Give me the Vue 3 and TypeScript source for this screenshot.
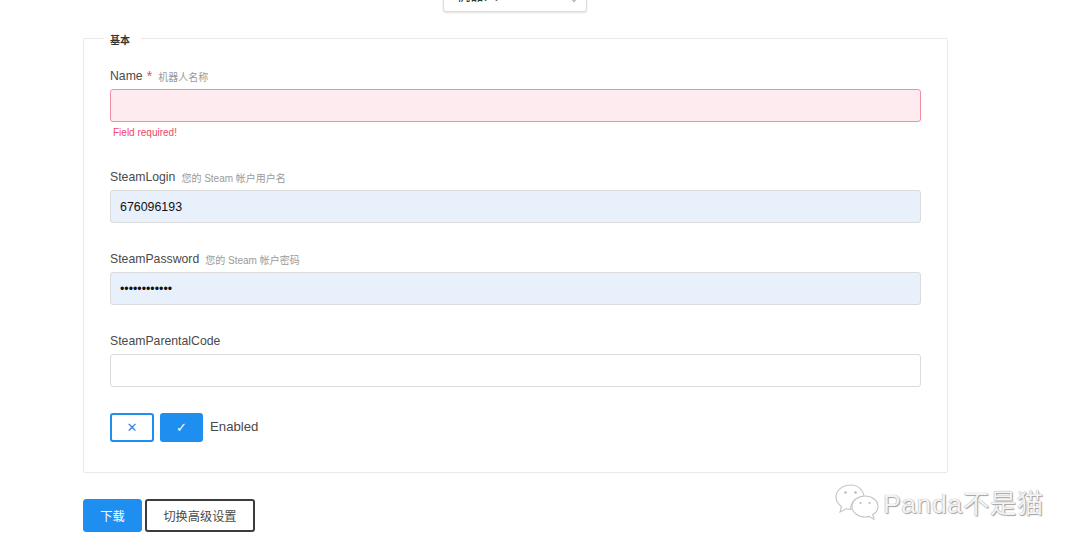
<script setup lang="ts">
interface Field { label: string; hint: string; value: string; type: string; state: string; required: boolean; error: string }
const fields: Field[] = [
  { label: 'Name', hint: '机器人名称', value: '', type: 'text', state: 'invalid', required: true, error: 'Field required!' },
  { label: 'SteamLogin', hint: '您的 Steam 帐户用户名', value: '676096193', type: 'text', state: 'filled', required: false, error: '' },
  { label: 'SteamPassword', hint: '您的 Steam 帐户密码', value: '............', type: 'password', state: 'filled', required: false, error: '' },
  { label: 'SteamParentalCode', hint: '', value: '', type: 'text', state: '', required: false, error: '' },
]
</script>

<template>
  <div class="page">
    <div class="top"><div class="select"><span class="select-text">机器人</span><span class="caret"></span></div></div>
    <fieldset class="box">
      <legend>基本</legend>
      <div v-for="f in fields" :key="f.label" class="field" :class="{ 'has-error': f.error }">
        <div class="label-row">
          <span class="label">{{ f.label }}</span>
          <span v-if="f.required" class="req">*</span>
          <span v-if="f.hint" class="hint">{{ f.hint }}</span>
        </div>
        <input class="input" :class="f.state" :type="f.type" :value="f.value" readonly />
        <div v-if="f.error" class="error">{{ f.error }}</div>
      </div>
      <div class="toggle-row">
        <button class="tbtn off">✕</button>
        <button class="tbtn on">✓</button>
        <span class="toggle-label">Enabled</span>
      </div>
    </fieldset>
    <div class="actions">
      <button class="btn primary">下载</button>
      <button class="btn outline">切换高级设置</button>
    </div>
    <div class="mark">
      <svg width="46" height="38" viewBox="0 0 46 38" fill="#fff" stroke="#c4c4c4" stroke-width="1.1">
        <path d="M17 2C8 2 2 7.500 2 14c0 4 2 7 5.500 9.500L6 29l6.500-3.200c1.500.4 3 .6 4.500.5-1-5 3-11 10-12.300h3C29.500 7 24 2 17 2z"/>
        <path d="M31 13c-7 0-13 4.500-13 10.500S24 34 31 34c1.500 0 2.500-.2 4-.6l5 3-1.300-4.800C42 29.800 44 27 44 23.500 44 17.500 38 13 31 13z"/>
        <circle cx="11.500" cy="9.500" r="1.300" fill="#bbb" stroke="none"/>
        <circle cx="21.500" cy="9.500" r="1.300" fill="#bbb" stroke="none"/>
        <circle cx="26.500" cy="20" r="1.100" fill="#bbb" stroke="none"/>
        <circle cx="35.500" cy="20" r="1.100" fill="#bbb" stroke="none"/>
      </svg>
      <span class="mark-text">Panda不是猫</span>
    </div>
  </div>
</template>

<style>
html, body { background: #fff; }
</style>

<style scoped>
.page {
  width: 1080px;
  height: 551px;
  overflow: hidden;
  position: relative;
  box-sizing: border-box;
  padding-left: 83px;
  font-family: "Liberation Sans", "Noto Sans CJK SC", sans-serif;
  color: #4a4a4a;
}
.top { height: 29px; position: relative; }
.select {
  position: absolute;
  left: 360px;
  top: -22px;
  width: 144px;
  height: 34px;
  box-sizing: border-box;
  border: 1px solid #dbdbdb;
  border-radius: 3px;
  box-shadow: 0 1px 2px rgba(0,0,0,.12);
  padding: 5px 12px;
  font-size: 14px;
  color: #363636;
  background: #fff;
}
.caret {
  position: absolute;
  right: 9px;
  top: 16px;
  width: 5px;
  height: 5px;
  border-right: 1px solid #aaa;
  border-bottom: 1px solid #aaa;
  transform: rotate(45deg);
}
.box {
  margin: 0;
  width: 865px;
  height: 444px;
  box-sizing: border-box;
  border: 1px solid #e9e9e9;
  border-radius: 2px;
  padding: 0 26px;
  min-width: 0;
}
legend {
  margin-left: -6px;
  padding: 6px 0 0;
  width: 37px;
  font-size: 10px;
  line-height: 12px;
  font-weight: 700;
  color: #363636;
  text-indent: 6px;
  white-space: nowrap;
}
.field { height: 82px; }
.field:first-of-type { margin-top: 19px; }
.field.has-error { height: 101px; }
.field:last-of-type .label-row { margin-bottom: 2px; }
.label-row {
  height: 20px;
  display: flex;
  align-items: center;
  margin-bottom: 3px;
}
.label { font-size: 12.25px; color: #4a4a4a; }
.req { color: #f14668; font-size: 14px; margin-left: 4px; }
.hint { font-size: 10px; color: #9a9a9a; margin-left: 6px; }
.input {
  display: block;
  width: 811px;
  height: 33px;
  box-sizing: border-box;
  border: 1px solid #dbdbdb;
  border-radius: 3px;
  padding: 1px 9px 0;
  font-family: "Liberation Sans", sans-serif;
  font-size: 12.4px;
  color: #111;
  background: #fff;
  outline: none;
}
.input.filled { background: #e8f0fb; }
.input.invalid { background: #feebef; border-color: #f38fa3; }
.error {
  font-size: 10px;
  color: #f14668;
  margin: 4px 0 0 3px;
  line-height: 13px;
}
.toggle-row {
  display: flex;
  align-items: center;
  height: 29px;
}
.tbtn {
  height: 29px;
  box-sizing: border-box;
  border-radius: 3px;
  border: 2px solid #1f8ef1;
  font-size: 13px;
  padding: 0;
  font-family: "DejaVu Sans", sans-serif;
}
.off { width: 44px; background: #fff; color: #1f8ef1; }
.on { width: 43px; margin-left: 6px; background: #1f8ef1; color: #fff; }
.toggle-label { font-size: 13.2px; margin-left: 7px; color: #4a4a4a; margin-top: -3px; }
.actions { display: flex; margin-top: 26px; gap: 3px; }
.btn {
  height: 33px;
  box-sizing: border-box;
  border-radius: 3px;
  font-size: 12.2px;
  font-family: "Liberation Sans", "Noto Sans CJK SC", sans-serif;
  padding: 0;
}
.primary { width: 59px; background: #1f8ef1; border: 1px solid #1f8ef1; color: #fff; }
.outline { width: 110px; background: #fff; border: 2px solid #3c3c3c; color: #4a4a4a; }
.mark {
  position: absolute;
  left: 834px;
  top: 482px;
  display: flex;
  align-items: center;
  gap: 3px;
}
.mark-text {
  font-size: 26.5px;
  letter-spacing: .6px;
  color: #f4f4f4;
  text-shadow: 0 0 1px #8a8a8a, 1px 1px 1px #a5a5a5;
  font-family: "Liberation Sans", "Noto Sans CJK SC", sans-serif;
}
</style>
